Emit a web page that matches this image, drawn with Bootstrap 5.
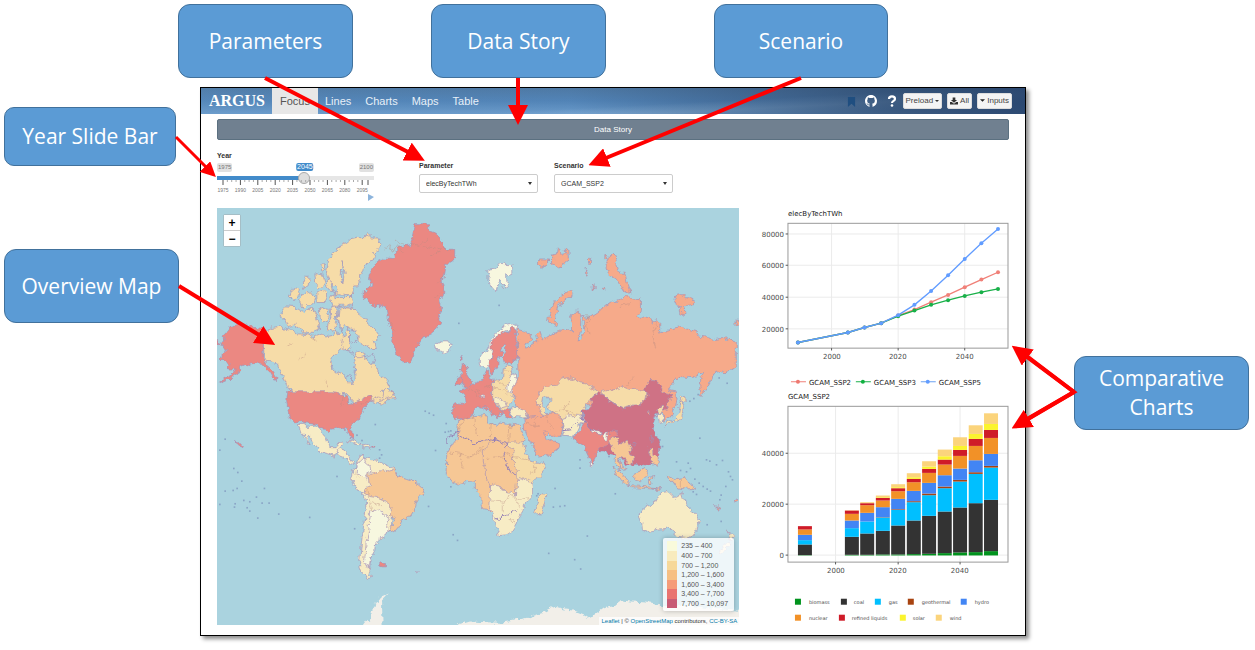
<!DOCTYPE html>
<html lang="en">
<head>
<meta charset="utf-8">
<meta name="viewport" content="width=device-width, initial-scale=1">
<title>ARGUS dashboard overview</title>
<link href="https://cdn.jsdelivr.net/npm/bootstrap@5.3.0/dist/css/bootstrap.min.css" rel="stylesheet">
<style>
body{font-family:"Liberation Sans",Arial,sans-serif;font-size:8px;line-height:1.25;color:#333;background:#fff}
.stage{min-height:100vh;padding:4px 0 13px}
.top-notes{display:grid;grid-template-columns:178fr 175fr 78fr 175fr 108fr 174fr 367fr;margin-bottom:9px}
.main-grid{display:grid;grid-template-columns:200fr 826fr 229fr}
.callout{background:#5b9bd5;border:1px solid #41719c;border-radius:12px;color:#fff;font:21px/29px "Open Sans","Noto Sans",sans-serif;min-height:74px;display:flex;align-items:center;justify-content:center;text-align:center}
.callout.short{min-height:59px;border-radius:10px}
.notes-left{padding:20px 21px 0 4px}
.notes-left .callout.short{margin-right:3px;margin-bottom:83px}
.notes-right{padding:269px 6px 0 48px}
.arrows{position:absolute;inset:0;width:100%;height:100%;pointer-events:none}
.dash{border:1px solid #000;box-shadow:3px 3px 4px rgba(0,0,0,.45);background:#fff}
.topbar{height:26px;padding:0 13px 0 0;flex-wrap:nowrap;background:linear-gradient(90deg,rgba(95,143,190,.2),rgba(70,110,160,.1) 45%,rgba(42,67,102,.75) 85%,rgba(38,65,105,.9)),linear-gradient(177deg,transparent 58%,rgba(150,190,225,.5) 72%,transparent 84%),linear-gradient(180deg,#4f7aa5,#5386b9 50%,#6fa0cf)}
.brand-name{font:bold 16px/26px "Liberation Serif",serif;color:#fff;width:71px;padding-left:8px;text-decoration:none}
.topbar .nav-link{font-size:11px;line-height:26px;padding:0 7px;color:#e8f0f8}
.topbar .nav-link.active{background:#e7e7e7;color:#555;padding:0 8px}
.tool-btn{font-size:8px;line-height:14px;padding:0 2px;border:1px solid #ddd;border-radius:2px;background:#f4f4f4;color:#444}
.tools{gap:5px;padding-top:5px}
.story-btn{font-size:8px;line-height:19px;padding:0;border:1px solid #5b7080;border-radius:2px;background:#708090;color:#fff}
.dash-body{padding:5px 16px 10px}
.controls{min-height:68px;padding-top:11px}
.field-label{font-size:7px;font-weight:bold;line-height:10px;display:block;color:#333}
.year-box{width:157px;margin-right:45px}
.tags{height:9px;margin-top:2px}
.tag{font-size:6px;line-height:8px;padding:0 1px;border-radius:2px;background:#e1e1e1;color:#777}
.tag.now{background:#428bca;color:#fff;font-size:7px;position:absolute;left:56%;transform:translateX(-50%)}
.year-range{appearance:none;-webkit-appearance:none;display:block;width:100%;height:12px;margin:0;background:linear-gradient(90deg,#428bca 56%,#e6e6e6 56%) center/100% 4px no-repeat}
.year-range::-webkit-slider-thumb{-webkit-appearance:none;width:12px;height:12px;border-radius:50%;background:#dedede;border:1px solid #aaa}
.ticks{display:block;width:100%;margin-top:-4px;overflow:visible}
.pick{width:119px;margin:10px 16px 0 0}
.pick .field-label{margin-bottom:3px}
.pick .form-select{font-size:7px;line-height:10px;height:19px;padding:3px 6px;border:1px solid #ccc;border-radius:2px;background-image:none;color:#333}
.pick-wrap::after{content:"";position:absolute;right:6px;top:8px;border:2px solid transparent;border-top:3px solid #333;pointer-events:none}
.panels{display:grid;grid-template-columns:523fr 255fr;gap:15px}
.map-svg,.chart{display:block;width:100%}
.map-svg path{stroke:#a58fb5;stroke-width:2;stroke-linejoin:round}
.map-svg path.thin{fill:none;stroke:#b98c80;stroke-opacity:.6;stroke-width:2}
.map-svg path.edge{fill:none;stroke:#9580b5;stroke-width:3}
.map-svg path.ice{stroke:none}
.c1{fill:#f7f7df}.c2{fill:#f7ecc5}.c3{fill:#f6dca8}.c4{fill:#f6c795}.c5{fill:#f6aa8a}.c6{fill:#eb8882}.c7{fill:#cf7285}.sea{fill:#aad3df}
.zoomer{position:absolute;left:6px;top:6px;border:1px solid #a5bec6;border-radius:2px}
.zoomer button{display:block;width:16px;height:15px;border:0;background:#fff;font:bold 12px/14px "Liberation Sans",sans-serif;padding:0;color:#000}
.zoomer button+button{border-top:1px solid #ccc;height:16px}
.key-box{position:absolute;right:5px;bottom:14px;width:71px;height:73px;padding:3px 4px;background:rgba(255,255,255,.8);border-radius:2px;box-shadow:0 0 5px rgba(0,0,0,.25);font-size:7px;display:grid;grid-template-columns:14px 1fr;align-items:stretch;line-height:9px;color:#555}
.key-box i{margin-right:4px}
.key-box i:nth-of-type(1){background:#f9fadb}.key-box i:nth-of-type(2){background:#f8ebbd}.key-box i:nth-of-type(3){background:#f6d899}.key-box i:nth-of-type(4){background:#f6bf83}.key-box i:nth-of-type(5){background:#f59b78}.key-box i:nth-of-type(6){background:#e97370}.key-box i:nth-of-type(7){background:#c85c75}
.credit{position:absolute;right:0;bottom:0;background:rgba(255,255,255,.75);font-size:6px;line-height:8px;padding:0 2px;color:#333;white-space:nowrap}
.credit a{color:#0078a8;text-decoration:none}
.chart text{font-family:"DejaVu Sans",sans-serif;font-size:7px;fill:#4d4d4d}
.chart .ttl{fill:#222}
.chart .fine{font-size:5px}
</style>
<script src="https://cdn.jsdelivr.net/npm/bootstrap@5.3.0/dist/js/bootstrap.bundle.min.js" defer></script>
</head>
<body>
<div class="stage position-relative">
<div class="top-notes">
 <span></span><div class="callout">Parameters</div><span></span><div class="callout">Data Story</div><span></span><div class="callout">Scenario</div>
</div>
<div class="main-grid">
 <aside class="notes-left"><div class="callout short">Year Slide Bar</div><div class="callout">Overview Map</div></aside>
 <main class="dash">
  <nav class="topbar d-flex align-items-start">
   <a class="brand-name" href="#">ARGUS</a>
   <a class="nav-link active" href="#">Focus</a><a class="nav-link" href="#">Lines</a><a class="nav-link" href="#">Charts</a><a class="nav-link" href="#">Maps</a><a class="nav-link" href="#">Table</a>
   <div class="tools ms-auto d-flex align-items-center">
    <svg class="me-1" width="9" height="11" viewBox="0 0 10 12" aria-hidden="true"><path d="M1 1h8v11L5 8.500 1 12z" fill="#1f4e80"/></svg>
    <svg class="me-1" width="12" height="12" viewBox="0 0 16 16" aria-hidden="true"><path fill="#fff" d="M8 0C3.580 0 0 3.580 0 8c0 3.540 2.290 6.530 5.470 7.590.4.070.55-.17.55-.38v-1.490c-2.010.37-2.530-.49-2.690-.94-.09-.23-.48-.94-.82-1.130-.28-.15-.68-.52-.01-.53.63-.01 1.080.58 1.230.82.72 1.210 1.870.87 2.330.66.07-.52.28-.87.51-1.070-1.780-.2-3.640-.89-3.640-3.950 0-.87.31-1.590.82-2.150-.08-.2-.36-1.020.08-2.120 0 0 .67-.21 2.200.82A7.600 7.600 0 018 3.860c.68 0 1.360.09 2 .27 1.530-1.040 2.200-.82 2.200-.82.44 1.100.16 1.920.08 2.120.51.56.82 1.270.82 2.150 0 3.070-1.870 3.750-3.650 3.950.29.25.54.73.54 1.480v2.200c0 .21.15.46.55.38A8 8 0 0016 8c0-4.420-3.580-8-8-8z"/></svg>
    <svg width="12" height="12" viewBox="0 0 12 12" aria-hidden="true"><path d="M3 4C3 .5 9 .5 9 4c0 2-3 1.800-3 4" fill="none" stroke="#fff" stroke-width="2.200"/><circle cx="6" cy="10.500" r="1.300" fill="#fff"/></svg>
    <button class="tool-btn">Preload <svg width="4" height="4" viewBox="0 0 4 4"><path d="M0 1h4L2 3z" fill="#333"/></svg></button>
    <button class="tool-btn"><svg width="8" height="8" viewBox="0 0 9 8"><path d="M3 0h3v3h2L4.500 6 1 3h2zM0 5h2l2.500 2L7 5h2v3H0z" fill="#333"/></svg> All</button>
    <button class="tool-btn"><svg width="5" height="5" viewBox="0 0 6 5"><path d="M0 1h6L3 4z" fill="#222"/></svg> Inputs</button>
   </div>
  </nav>
  <div class="dash-body">
   <button class="story-btn w-100 d-block">Data Story</button>
   <div class="controls d-flex align-items-start">
    <div class="year-box">
     <label class="field-label" for="year">Year</label>
     <div class="tags d-flex justify-content-between position-relative"><span class="tag">1975</span><span class="tag now">2045</span><span class="tag">2100</span></div>
     <input class="year-range" id="year" type="range" min="1975" max="2100" step="5" value="2045">
     <svg class="ticks" viewBox="0 0 157 24"><g id="yearTicks"></g><path d="M151 14l6 3-6 4z" fill="#8db4dc"/></svg>
    </div>
    <div class="pick"><label class="field-label" for="param">Parameter</label><div class="pick-wrap position-relative"><select class="form-select" id="param"><option>elecByTechTWh</option></select></div></div>
    <div class="pick"><label class="field-label" for="scen">Scenario</label><div class="pick-wrap position-relative"><select class="form-select" id="scen"><option>GCAM_SSP2</option></select></div></div>
   </div>
   <div class="panels">
    <div class="position-relative">
<svg class="map-svg" viewBox="20 24 1569 1254" role="img" aria-label="World map">
<defs><filter id="coast" filterUnits="userSpaceOnUse" x="0" y="0" width="1640" height="1300" color-interpolation-filters="sRGB"><feTurbulence type="fractalNoise" baseFrequency="0.06" numOctaves="3" seed="4"/><feDisplacementMap in="SourceGraphic" scale="20" xChannelSelector="R" yChannelSelector="G"/></filter></defs>
<rect class="sea" x="20" y="24" width="1569" height="1254"/>
<g filter="url(#coast)">
<!-- Antarctica -->
<path class="ice" fill="#f2efe9" d="M456 1298l0-20 18-24 8 12 4-34 14-20 6-16 30-14-20 20 0 24 2 72zM740 1278l40-12 30 2 60 2 40-6 45-10 45-14 35-18 30 8 30 4 30 12 15 10 40-30 35-6 20-18 30 4 50 4 50 10 30-4 50 2 60 10 144 10v68h-869z"/>
<!-- North America -->
<path class="c3" d="M158 392l26-8 22-4 18 6 20 2 20 14 20 2 26 6 16-2 14-6 12 8 20-4 12-12 14 8 6 12 8 24-10 18-14 4-18 8-8 16 2 22 20 10 20 8 10 14 4 16 6 0 2-18 10-14-4-22 0-26 14-12 18 10 20 14 10 16 10 6 14 24 10 10 8 18-8 10-14 2 10 8 16-8 10 6 8 16-24 2-14 20-14-2-10-14-16 6-22 12-18 4-6 8-10-12 2-20-18-14-18-4-18 0-120 0-18-14-12-30-12-18-8-22-18-10-22-2z"/>
<g class="c3">
<path d="M228 318l26 2 16 12 16 6 14-10 10 2 8 16 4 20 6 18-16 6-14 12-20-4-14-14-12-8-20 4-8-20-10-4-4-10z"/>
<path d="M238 290l6-18 16-10 10 10-2 12-12 4-6 14z"/><path d="M264 296l14-12 18-12 8 12 12 8-4 22-22 2-10 10-6-12z"/>
<path d="M276 252l8-20 12 0-2 28-12 8z"/><path d="M314 218l20 4 8 26-8 14-10 2-8-18z"/><path d="M320 280l14-8 14 2 2 16-4 18-20 0-6-12z"/><path d="M348 238l10 2 12 14 2 20-12 0-10-14z"/>
<path d="M356 180l18-28 14-8 10-14 16-2 8-12 30-6 20 0 0-12 8 2 0 14 28 0 4 16-6 16-12 14-4 20-14 4-14 14-4 14-10 16 2 16-10 14-12 0-4 20 0 16 4 18-8 14-30-2-22-6-6-20 10-14 6-14-8-16-14-12-8-20z"/>
<path d="M328 330l14-6 12 2 2 18-6 20-10 2-10-12z"/><path d="M360 322l18-4 4 20-4 20 4 26-4 14-12-4-14-6 2-18 8-16z"/>
<path d="M386 328l20-4 28 2 14 14 8 16 18 6 12 20 12 12 10 14-8 12-10 4 6 22-14 0-22-10-12-16-16-14-6-20-18-4-10 8-10-16-4-18z"/>
<path d="M398 400l14-12 10 6-4 28 4 18-10 14-8-12-10-4z"/><path d="M336 196l6-6 2 24-6 4z"/><path d="M436 458l16-4 14 8-8 10-16 2z"/>
</g>
<path class="sea" d="M372 464l28-14 22 6 10 14 4 20-4 24 4 26-8 10-6-22-20 0-24-12-14-18-2-20z"/>
<g class="sea"><path d="M404 374l10 6-6 20 0 14-12-4 0-20z"/><path d="M418 394l18-4 6 26-14 14-10-8z"/><path d="M362 254l16 6 4 20-14-4z"/><path d="M466 470l20-6 8 16-8 16-12-6-6-10z"/><path d="M380 340l6 36 12 20-16 6-8-26z"/><path d="M374 284l50 4 0 5-50 0zM384 316l40 0 0 6-40 0z"/><path d="M396 182l6 40-4 30-5-26z"/></g>
<path class="c3" d="M482 604l28-12 8 2 4-20 10-8 14 10 4 12-16 4-24 12-16 4z"/>
<path class="c6" d="M158 488l0-102-18-2-16-2-22-4-24-6-18 10-14 18-10 10 10 10-12 6-2 10 12 2 6 14-14 12-4 14 12 8 12 4-4 16 14 2 12 0-10 14-20 10-20 14-2 4 16-6 20-10 28-20 2-14 14-6 14 4 8-6 22-2 8 8 14 8 12 22 14 18 2-16-8-12-16-16z"/>
<path class="c6" d="M20 422l10 6-10 6z"/>
<path class="c6" d="M233 576l132 0 16 2 20 8 14 14 0 14 16-2 18-10 22-14 8-2 6 12-10 12-12 14-4 14-14 20-18 18-2 14 2 28-8-2-8-24-22-8-26 4-6 8-14-10-16-2-6-10-24-2-24-6-22 0-14-12-4-24-4-30z"/>
<path class="thin" d="M395 620l4-30 14 4 0 20M452 620l8-10 10-2M230 440l20-12M265 480l24-14M345 540l8 20M300 410l16 10"/>
<path class="c2" d="M264 674l16 0 14 6 22 0 14 14 14 12 8 24 10 14 16 0 4-12 16-2-8 20-14 8-4 12-20-8-26-8-16-18-8-22-8-6-4 8 10 20-10-8-8-22-10-10z"/>
<path class="c2" d="M376 754l12-8 22 8 4 16 10 14 12 2-2 8-14-2-14-16-20-8zM412 724l20-4 20 12-8 4zM452 736l14-2 14 8-14 4z"/>
<path class="c6" d="M482 742l14 0 0 4-14 0zM72 726l16 4 10 10-6 2-8-8z"/>
<!-- Greenland and Iceland -->
<path class="c6" d="M616 74l40 0 0 18 20 8 14 14 8 22 14 12 22 0 0 28-8 8-22 12-2 24-6 22 6 20-2 24-8 14 6 24-12 20 6 22-12 20-18 16-24 10-12 22-16 20-4 24-10 16-18-6-16-20-8-26-10-24 0-24-8-24-4-40-10-12-36-2-14-20-10-4 0-20 20-14 0-20-10-2 4-14 18-22 6-14 26-12 24 2 10-12 4-22 22-6 16 0z"/>
<path class="thin" d="M520 150l20-16 10 20 16-20 10 22M560 120l28 20M600 130l26 6 30-18M636 136l40 8 14 20M660 170l40-30 20 14M700 230l-18 20M540 370l18 30M690 280l-20 20"/>
<path class="c1" d="M676 434l16-8 24 0 8 12-8 12-20 8-16-10z"/>
<!-- South America -->
<g transform="translate(0 600)">
<path class="c2" d="M462 176l20 4 20 2 24 14 26 10 6 8 10 20 0 40-20 70-4 30 0 10-10 8-10 0 0 12-6 14-14 4-12 22-4 20-8 30-6 26 8 6 6 4-12 4-20-14-8-24 4-50 8-60 8-60-4-36-16-14-12-16-12-26 2-18 14-10 4-22 10-20z"/>
<path class="c1" d="M442 194l20-20 4 14 14 12 2 20-10 0-2 18-20-12-12-4z"/>
<path class="c1" d="M482 336l12-8 16 8 16 12 12 6-8 16 0 24-8 16-14 4-2 14-10 8-2 20-8 14-6 16-2 14-16-4 4-40 2-30 8-30 2-30z"/>
<path class="c4" d="M474 226l12-10 16 6 14-12 22 4 16-4 10 14 4 10 20 4 24 8 16 10 14 12-6 18-14 12-8 30-12 20-26 14-10 22-12 14-16-8 4-10 12-16-8-14-6-16 4-16-16-12-26-12-24-4-14-8-2-14 16-6z"/>
<path class="thin" d="M430 222l28 10M470 270l8 36 8 30M486 306l30 16"/><path class="c6" d="M512 492l14 0 0 10-14 0z"/><path class="c1" d="M616 516l6-2 4 4-8 2z"/>
</g>
<!-- Europe -->
<g transform="translate(690 330)">
<path class="c1" d="M118 144l10-14 20-14 4-24 12-20 16-14 20-12 22-4 12 4-4 12-16 2-20 4-16 10-12 30-10 20-2 40-16 12-12-6-8-10z"/>
<path class="c6" d="M156 94l12-16 20-12 10 2 10 0 4-14 10-2 4 14 4 40 6 20-4 22-20 10-20 2-2-24 6-16 6-12-6-6-10 14-2 18-10 14 0 20-14 20-8 2-6-24 10-24z"/>
<path class="c6" d="M132 210l0-22 4-8 10 4 2 18 8 4 4 30-2 16 6 8-4 10 12 20 18 16-4 8-8 2-4 10-10-8-8-6-14-18-10 0-14-4-14 10-6 14-14 12-12 6-12-6-14 2-8-4 0-38 8-4 22 2 10-6-2-20-16-14 20-8 18-12z"/>
<path class="c6" d="M66 170l10-4 4 12 0 10 6 20 12 8-6 14-26 6 2-14-2-12-4-14zM48 210l14-10 6 12-6 14-14 2zM62 138l4 0 0 14-4 0z"/>
<path class="c6" d="M186 294l20-2 8 8-8 4 8 20-12 4-8-16-8-8zM130 292l6-6 4 18-6 2z"/>
<path class="c3" d="M190 176l24-12 4 18-2 12 20 14-20 30 4 16-2 14-10 12-6 18-14 4-10-10-14-16-6-10 0-50 20-6 10-4z"/>
<path class="c1" d="M198 224l10-4 2-20 12-8 10 20 4 16 12 8 22 4-4 14-18 2-4 14-12 0-6-18-18-4-10-8zM122 258l12 0 2 6-12 0z"/>
<path class="c2" d="M160 268l18-4 16 12 6 14-14 4-12-12-12-4zM214 296l20-8 26 2 26 6 8 16-20 8-30 2-26-2-8-14z"/>
<path class="c3" d="M280 288l20 0 16 8-2 10-14 2-10-12z"/>
<path class="thin" d="M160 236l30 4 12 12M190 180l26 2M164 208l30 20M104 240l20 10M132 232l20-6M90 240l30 20"/>
<!-- Africa -->
<path class="c4" d="M56 330l36-8 36-4 14 0 0 22 20 8 20-8 20 4 20 0 20 4 6 20 4 30-52 2-2 24-4 60 6 18-4 40 0 34-2 40-36-4-16-16-18-2-2-40-16-16 0-24-28 2-26 8-20-10-14-24 2-36 0-20 16-28 16-20z"/>
<path class="c3" d="M202 398l48-2 6 26 8 18 10 16 24 6 14-6 4 6-10 30-24 24-18 30-8 24-16 20-22-14-24-16-4-30 6-36-10-40 4-32z"/>
</g>
<g transform="translate(780 600)">
<path class="c4" d="M46 226l0-16-6-20 0-40 34-30 30 10 28 20-2 46 12 14 0 20-2 30-4 36-24-14-20-20-28 2z"/>
<path class="edge" d="M-70 132l4-22 26-10 54 34 20-10 30-6 44 10 2 10-8 30 6 20 14 30 16 8"/>
<path class="c2" d="M62 252l26 4 10 18 26 4 12 12 4-44 8-12 36 12 4 22 0 20-24 26-6 24-8 14-16 28-12 18-12 8-22 2-10-32-8-20-10-40z"/>
<path class="edge" d="M76 352l12 8 12-12 20-8 12-10 14 6"/><path class="thin" d="M66 304l40 4 14-22 20 14 6 24M100 308l0 30M146 300l32-6M120 360l10 2 4 8-8 2zM0 176l40-40M50 180l50-10 10 14M106 160l20 10 50 8 24 30-20 16M60 130l4-60M120 70l-4 60M-60 160l30 4 10 40M-30 164l34 10 40-30M-40 100l30-50M10 50l10 60"/>
<path class="c3" d="M200 318l4-20 18-16 6 4-4 20-10 38-14 2-4-14z"/>
</g>
<!-- Russia and Asia -->
<g transform="translate(780 0)">
<path class="c1" d="M54 208l26-4 6-10 38 0 2 26-16 6 2 40-10-4-12-22-6 16-6 20-12-14-12-20z"/>
<g class="c5"><path d="M206 180l30 0 0 14-20 8-10-8z"/><path d="M248 166l12-4 2-14 8 0 4 14 14 0-2-14 8 0 2 30-18 16-6 16-10-14-14-4z"/><path d="M412 178l16-14 8 0 6 30 8 26 16 0 6 30 12 30-30-14-16-30-18-10-8-20z"/><path d="M235 366l4-22 14-36 20-24 30-12 8 8-20 16-20 14-10 30-6 26 12 10-10 4z"/><path d="M618 288l16-4 20 8 22 10 0 12-22 2-10 4-20 0-8-20zM630 322l12 0 4 16-12 8zM356 178l6 0 0 12-6 0zM346 208l6 10 0 10-4 0zM405 164l6 0 0 12-6 0zM370 254l3 0 0 16-3 0zM401 262l4 0 0 8-4 0zM799 364l8 0 0 12-8 0z"/></g>
<path class="c5" d="M142 388l24 6 20 14 0 14-16 6-8 16 10 0 10-10 22-6-4-26 10-6 8 24 20-12 26-14 20 0 14-8 10 8 0-24-6-20 10-16 14 0 2 14 14 0 16 6 22-14 30-24 12-8 20-6 30-14 16 8 24 4 0 28-14 24 30 0 22 14 14-4 6 12 0 26 20-8 26-8 20-4 14 10 30 8 6 10 24 4 26 8 30-6 34 14 0 70-20 14-20 10-10-6-18 4-10 22-12 22-14 22-6-20 4-32 10-16-14 4-22 12-22-2-18-2-26 30-6 10 20 4 6 26-4 20-14 30-20 14 0-20-16-16-10-14-24-10-18 14-8 20-24-2-30-8-34 0-14 14-12-2-24-8-20-20-18-8-24 6-10 18-28 14-34 2-2 22 6 28-16 16-10 10-20-6-14-14-16-14 8-18 4-14-10-18-28-16-10-50 12-24 4-16z"/>
<path class="sea" d="M334 346l10 4-4 26 4 20-8 18-8 10 4-40z"/>
<path class="thin" d="M346 340l16 20-16 14 12 24M450 320l30-10M560 370l-14 40 14 36M470 556l20-24M150 420l-10 20"/>
<path class="c3" d="M216 570l16-10 32-4 10-18 20-4 20 2 14 10 20 4 14 12 18 12 4 4-14 16-20 18-10 30-20 18-16 8-30-4-8 14-26-14-16-10-14-24-14-30z"/>
<path class="thin" d="M244 640l40-12 26 14 34 4M284 628l14-24M300 650l-20-30"/>
<path class="sea" d="M218 592l18 0 6 12-10 16 14 20-10 20-10-12 2-20-14-12z"/>
<path class="c3" d="M396 572l16-2 24 0 20-10 20 8 36 4 20 6-4 20-24 18-20 0-30 8-20-12-26-12z"/>
<path class="c7" d="M334 632l30-8 0-24 26-26 16 20 22 16 30 14 30-6 22-2 20-16 6-14-12-14 6-14 12-16 14 2 18 16 10 18 18 4 4 10-14 20 4 14-20 4-14 16-14 8 6 20-4 14 14 20 6 30-2 26-20 22-20 10-26-2-20 4-14-2-14-20-20-10-18-4-28-8-24-20-12-24 6-16z"/>
<path class="c2" d="M278 656l24-8 34-2 10 20-18 10-16 36-34-2 6-16-6-20z"/>
<path class="c6" d="M310 718l8-10 16-24 8-22 12 6 0 14 14 8 14 10 16 4 14-4 16-6 18 2-10 14-4 20-16-4-4 10-20 8-14 16-6 24-4 6-8-10-12-26-6-16z"/>
<path class="c1" d="M362 688l32 8 0 6-24-4zM404 700l8 0 0 22-12-2zM359 784l10 6-2 10-8-4z"/>
<path class="edge" d="M278 694l24-4 22-24M334 632l4 26 24 32"/>
<path class="c5" d="M162 654l40-4 20 0 14-10 24 2 14 10 4 32-4 26-30 0-14-16-10 0 10 26 18 6 20 4-6 18-28 20-28 4-6-6-8-24-20-36-8-20z"/>
<path class="thin" d="M230 646l4 22 14 20M200 654l-10 20 20 6M170 670l30 10"/>
<path class="c4" d="M418 728l14-20 10 4 8 20 12 0 10-8 10 14 4 16-6 4 10 20-6 20-12-12-14-14-10 8 4 34-16-30 2-22-10-14zM428 802l18 10 18 20 14 18 2 8-20-8-18-22zM448 778l8 14 10 20-10-4-10-20zM492 824l18-6 12-16 10 10-4 20-16 14-20-6zM480 858l60 4 20 2-10 4-60-4zM536 830l20-2-14 10 2 14-8-2zM540 744l8 0 2 22 16 10-2 24-14-8-4-14-10-16zM594 830l24 10 26-4 26 20 8 16-20-8-14 4-22-4-14-20-14-6zM550 868l16-4 10 0-14 6z"/>
<path class="c3" d="M562 630l16-12 4 14-8 12-8-4zM634 606l12 4-6 20-4 24-22 12-20 8-8 8 4-14 22-8 14-16 4-18zM632 596l6-6 12 10-14 8z"/>
<path class="c2" d="M566 644l10 0 6 20-14 4zM508 940l20-18 28-12 12-22 16-10 14-2 8 8 14 14 8-12 6-8 10 30 14 20 20 16 10 20-6 28-12 20-14 6-30-4-14-18-14-10-30 2-36 8-14-4-2-22-6-18zM775 994l10 8 12 6-16 16zM770 1030l10 4-20 28-10-4z"/>
<path class="c5" d="M536 632l8 2 0 10-8 0zM734 918l14 6 4 4-8 0zM794 904l10-6-2 12-6 2z"/>
<path class="thin" d="M632 836v24"/>
<path class="c7" d="M540 712l8-2 0 14-6 0zM488 730l8-2 0 14-6 0z"/>
</g>
</g>
<g id="islands" fill="#8aa5c6"></g>
</svg>
     <div class="zoomer"><button aria-label="Zoom in">+</button><button aria-label="Zoom out">−</button></div>
     <div class="key-box"><i></i><span>235 – 400</span><i></i><span>400 – 700</span><i></i><span>700 – 1,200</span><i></i><span>1,200 – 1,600</span><i></i><span>1,600 – 3,400</span><i></i><span>3,400 – 7,700</span><i></i><span>7,700 – 10,097</span></div>
     <div class="credit"><a href="#">Leaflet</a> | © <a href="#">OpenStreetMap</a> contributors, <a href="#">CC-BY-SA</a></div>
    </div>
    <div>
<svg class="chart" viewBox="0 0 255 184">
 <g transform="translate(-5 -8) scale(.333333)" fill="none">
  <path d="M248 70v375M448 70v375M648 70v375M117 102h661M117 196h661M117 292h661M117 387h661" stroke="#ebebeb" stroke-width="3"/>
  <rect x="117" y="70" width="661" height="375" stroke="#999" stroke-width="3"/>
  <path d="M248 445v7M448 445v7M648 445v7M110 102h7M110 196h7M110 292h7M110 387h7" stroke="#555" stroke-width="3"/>
  <g id="lines" stroke-width="4"></g>
 </g>
 <text class="ttl" x="34" y="8">elecByTechTWh</text>
 <g text-anchor="end"><text x="30" y="29">80000</text><text x="30" y="60">60000</text><text x="30" y="92">40000</text><text x="30" y="124">20000</text></g>
 <g text-anchor="middle"><text x="78" y="151">2000</text><text x="144" y="151">2020</text><text x="211" y="151">2040</text></g>
 <g stroke-width="1"><path d="M37 174h15" stroke="#f08078"/><path d="M102 174h15" stroke="#18b048"/><path d="M167 174h15" stroke="#6aa2f2"/></g>
 <circle cx="44" cy="174" r="2" fill="#ee7870"/><circle cx="109" cy="174" r="2" fill="#10b040"/><circle cx="174" cy="174" r="2" fill="#619cff"/>
 <text class="ttl" x="55" y="177">GCAM_SSP2</text><text class="ttl" x="120" y="177">GCAM_SSP3</text><text class="ttl" x="185" y="177">GCAM_SSP5</text>
</svg>
<svg class="chart" viewBox="0 0 255 234">
 <g transform="translate(-5 -7) scale(.333333)" fill="none">
  <path d="M260 64v468M448 64v468M634 64v468M117 205h661M117 358h661M117 511h661" stroke="#ebebeb" stroke-width="3"/>
  <rect x="117" y="64" width="661" height="468" stroke="#999" stroke-width="3"/>
  <path d="M260 532v7M448 532v7M634 532v7M110 205h7M110 358h7M110 511h7" stroke="#555" stroke-width="3"/>
  <g id="bars"></g>
 </g>
 <text class="ttl" x="34" y="7">GCAM_SSP2</text>
 <g text-anchor="end"><text x="30" y="64">40000</text><text x="30" y="115">20000</text><text x="30" y="166">0</text></g>
 <g text-anchor="middle"><text x="82" y="181">2000</text><text x="144" y="181">2020</text><text x="206" y="181">2040</text></g>
 <g id="legend"></g>
</svg>
    </div>
   </div>
  </div>
 </main>
 <aside class="notes-right"><div class="callout">Comparative Charts</div></aside>
</div>
<svg class="arrows" viewBox="0 0 1255 650" preserveAspectRatio="none" aria-hidden="true">
 <defs><marker id="tip" markerUnits="userSpaceOnUse" markerWidth="20" markerHeight="20" refX="1" refY="10" orient="auto"><path d="M0 0L20 10 0 20z" fill="#f00"/></marker>
 <marker id="tipS" markerUnits="userSpaceOnUse" markerWidth="15" markerHeight="15" refX="1" refY="7" orient="auto"><path d="M0 0L15 7 0 15z" fill="#f00"/></marker></defs>
 <g fill="none" stroke="#f00" stroke-width="4">
  <path d="M265 78L408 152" marker-end="url(#tip)"/><path d="M518 78V106" marker-end="url(#tip)"/><path d="M801 78L606 158" marker-end="url(#tip)"/><path d="M179 286L259 335" marker-end="url(#tip)"/>
  <path d="M1028 357L1074 392 1029 418"/>
  <path d="M1074 392L1027 357" marker-end="url(#tip)"/><path d="M1074 392L1028 419" marker-end="url(#tip)"/><path d="M176 137L206 167" stroke-width="3" marker-end="url(#tipS)"/>
 </g>
</svg>
</div>
<script>
const put = (id, html) => { document.getElementById(id).innerHTML = html; };
// Slider scale: a long tick with a label every 15 years, short ticks between
let t = '';
for (let i = 0; i <= 32; i++) {
  const x = 6 + i * 4.35;
  t += `<path d="M${x} ${0}v${i % 4 ? 2 : 5}" stroke="${i % 4 ? '#aaa' : '#555'}"/>`;
}
t += '<path d="M151 0v5" stroke="#555"/>';
for (let i = 0; i < 9; i++) t += `<text x="${6 + i * 17.4}" y="12" font-size="5" text-anchor="middle" fill="#777">${1975 + 15 * i}</text>`;
put('yearTicks', t);
// Scenario lines
const xs = [147, 297, 347, 397, 448, 497, 547, 598, 648, 698, 748];
const runs = [
  ['#f08078', [428, 398, 383, 370, 347, 329, 307, 285, 262, 239, 217]],
  ['#18b048', [428, 398, 383, 370, 349, 332, 315, 301, 288, 277, 267]],
  ['#619cff', [428, 398, 383, 370, 346, 315, 273, 226, 177, 130, 87]]];
put('lines', runs.map(([c, ys]) =>
  `<polyline stroke="${c}" points="${xs.map((x, i) => x + ',' + ys[i]).join(' ')}"/>` +
  xs.map((x, i) => `<circle cx="${x}" cy="${ys[i]}" r="6" fill="${c}" stroke="none"/>`).join('')).join(''));
// Stacked bars: tops of each band from biomass up to wind
const cols = ['#00931d', '#333', '#00bfff', '#a84310', '#4285f4', '#f29127', '#cf1b28', '#fbf42e', '#fbd47c'];
const stacks = [
  [147, 511, 479, 466, 466, 450, 434, 424, 424, 424], [288, 510, 456, 430, 430, 407, 387, 377, 377, 376],
  [334, 510, 446, 410, 410, 384, 361, 355, 355, 352], [381, 509, 438, 398, 397, 367, 347, 339, 337, 332],
  [427, 509, 422, 375, 373, 342, 319, 310, 307, 298], [474, 508, 407, 352, 349, 318, 292, 282, 277, 265],
  [520, 507, 393, 331, 326, 294, 264, 252, 245, 229], [567, 505, 380, 310, 305, 271, 239, 224, 214, 194],
  [613, 503, 368, 290, 285, 251, 213, 195, 183, 157], [660, 502, 355, 267, 262, 226, 183, 162, 147, 121],
  [706, 499, 345, 248, 243, 207, 159, 135, 117, 85]];
put('bars', stacks.map(([x, ...v]) => v.map((y, i) =>
  `<rect x="${x}" y="${y}" width="42" height="${(i ? v[i - 1] : 512) - y}" fill="${cols[i]}"/>`).join('')).join(''));
const names = [['biomass', 41, 55, 0], ['coal', 87, 100, 0], ['gas', 121, 135, 0], ['geothermal', 154, 168, 0], ['hydro', 207, 221, 0],
  ['nuclear', 41, 55, 1], ['refined liquids', 85, 98, 1], ['solar', 146, 159, 1], ['wind', 182, 196, 1]];
put('legend', names.map(([n, x, tx, r], i) =>
  `<rect x="${x}" y="${207 + r * 16}" width="6" height="6" fill="${cols[i]}"/><text class="fine" x="${tx}" y="${212 + r * 16}">${n}</text>`).join(''));
// Small islands
const dots = [[70,806],[82,818],[94,844],[80,866],[68,872],[44,874],[28,914],[74,912],[72,922],[100,902],[118,906],[110,924],[118,934],[138,892],[155,910],[162,866],[176,910],[142,955],[205,943],[298,953],[380,830],[433,987],[44,718],[28,751],[655,920],[722,861],[729,1005],[742,1022],[645,634],[657,640],[670,646],[708,671],[705,697],[715,695],[722,693],[676,752],[495,674],[440,706],[455,722],[508,750],[514,765],[508,775],[746,370],[867,316],[1132,1009],[1016,1061],[1112,1108],[980,888],[984,882],[1030,922],[1050,920],[1064,918],[1035,866],[1110,805],[1110,780],[1197,770],[1216,882],[1470,715],[1490,780],[1400,786],[1412,812],[1430,816],[1455,838],[1468,850],[1480,860],[1492,868],[1502,874],[1500,784],[1520,795],[1538,782],[1556,816],[1562,830],[1568,840],[1548,860],[1534,886],[1530,900],[1492,975],[1534,965],[1460,884],[1450,876],[1435,790],[1442,806],[1358,740],[1350,720],[1094,1080],[1440,604],[1452,596],[1465,584],[1552,550],[1528,534]];
put('islands', dots.map(([x, y]) => `<rect x="${x - 2}" y="${y - 2}" width="5" height="5"/>`).join(''));
</script>
</body>
</html>
